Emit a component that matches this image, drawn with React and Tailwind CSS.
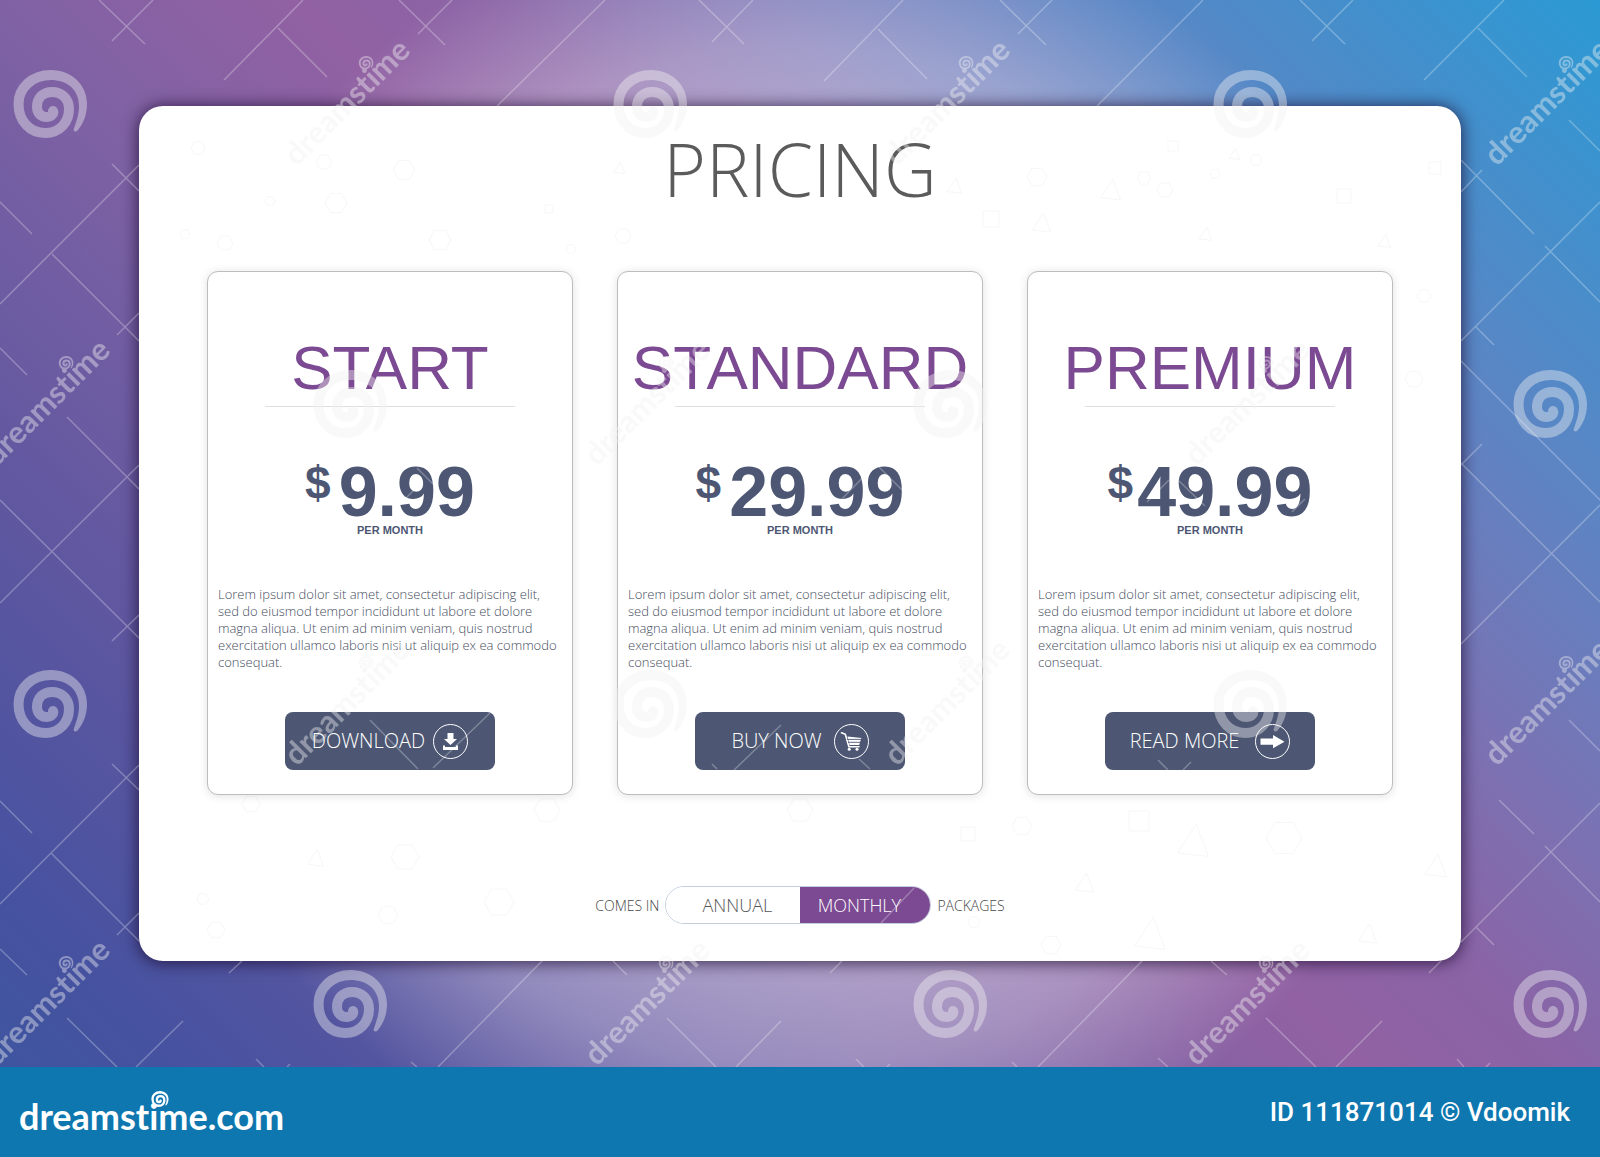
import { useState } from 'react';

const LOREM =
  'Lorem ipsum dolor sit amet, consectetur adipiscing elit, sed do eiusmod tempor incididunt ut labore et dolore magna aliqua. Ut enim ad minim veniam, quis nostrud exercitation ullamco laboris nisi ut aliquip ex ea commodo consequat.';

const DownloadGlyph = () => (
  <>
    <path d="M14.5 9h6v6h3.5L17.5 21 11 15h3.5z" fill="currentColor" />
    <path d="M10 21.5h2V23h11v-1.5h2V26H10z" fill="currentColor" />
  </>
);

const CartGlyph = () => (
  <>
    <path d="M7.5 8.8l3.8 1.4 3.6 12.6H25" fill="none" stroke="currentColor" strokeWidth="1.6" strokeLinecap="round" strokeLinejoin="round" />
    <path d="M13.4 12.6l14 1.4-2.2 7H15.6z" fill="currentColor" />
    <path d="M13 15.4h15M14 18.3h13" stroke="#4d5773" strokeWidth="0.9" />
    <circle cx="15.2" cy="25.2" r="1.5" fill="currentColor" />
    <circle cx="23" cy="25.2" r="1.5" fill="currentColor" />
  </>
);

const ArrowGlyph = () => (
  <path d="M5.5 14.5H18V11l11.5 6.7L18 24.3v-3.600H5.5z" fill="currentColor" />
);

const plans = [
  { name: 'START', price: '9.99', action: 'DOWNLOAD', glyph: DownloadGlyph, gap: 'gap-2', priceGap: 'gap-2' },
  { name: 'STANDARD', price: '29.99', action: 'BUY NOW', glyph: CartGlyph, gap: 'gap-3', priceGap: 'gap-2' },
  { name: 'PREMIUM', price: '49.99', action: 'READ MORE', glyph: ArrowGlyph, gap: 'gap-4', priceGap: 'gap-1' },
];

// Faint outlines scattered over the panel: [type, x, y, radius]
const confetti = [
  ['hex', 59, 42, 7], ['hex', 185, 56, 8], ['hex', 265, 64, 11], ['hex', 197, 97, 11], ['hex', 301, 134, 11],
  ['hex', 86, 137, 8], ['hex', 131, 95, 5], ['hex', 46, 128, 5], ['sq', 410, 103, 4], ['hex', 432, 143, 5],
  ['hex', 484, 130, 8], ['tri', 480, 62, 6], ['sq', 852, 113, 8], ['tri', 815, 80, 8], ['tri', 902, 117, 10],
  ['hex', 898, 71, 10], ['tri', 971, 84, 11], ['hex', 1005, 72, 7], ['hex', 1026, 84, 8], ['sq', 1034, 40, 5],
  ['tri', 1095, 48, 6], ['hex', 1117, 54, 6], ['hex', 1076, 68, 5], ['sq', 1205, 90, 7], ['sq', 1296, 62, 6],
  ['tri', 1066, 128, 7], ['tri', 1245, 135, 7], ['hex', 1285, 190, 7], ['hex', 1275, 273, 9],
  ['hex', 112, 698, 9], ['tri', 176, 752, 9], ['hex', 266, 751, 14], ['hex', 249, 809, 10], ['hex', 360, 796, 15],
  ['hex', 64, 793, 6], ['hex', 77, 824, 9], ['hex', 661, 704, 13], ['hex', 408, 704, 13], ['sq', 829, 728, 7],
  ['hex', 883, 720, 10], ['sq', 1000, 715, 10], ['tri', 1053, 735, 17], ['hex', 1145, 732, 18], ['tri', 1296, 760, 12],
  ['tri', 945, 777, 10], ['tri', 1010, 828, 17], ['tri', 1228, 828, 10], ['hex', 912, 839, 10], ['hex', 835, 816, 6],
];

const hex = (x, y, r) =>
  [0, 60, 120, 180, 240, 300]
    .map((a) => `${x + r * Math.cos((a * Math.PI) / 180)},${y + r * Math.sin((a * Math.PI) / 180)}`)
    .join(' ');

const Confetti = () => (
  <svg className="absolute inset-0 w-full h-full" aria-hidden="true" fill="none" stroke="#f7f7f8">
    {confetti.map(([type, x, y, r]) => {
      const key = `${x}-${y}`;
      if (type === 'sq') return <rect key={key} x={x - r} y={y - r} width={r * 2} height={r * 2} />;
      if (type === 'tri') return <path key={key} d={`M${x + r / 4} ${y - r}l${r * 0.7} ${r * 1.9}l${-r * 1.8} ${-r * 0.2}z`} />;
      return <polygon key={key} points={hex(x, y, r)} />;
    })}
  </svg>
);

const Swirl = () => (
  <g>
    <path
      d="M51 75C32 75 18.500 88 18.500 104C18.500 121 30 133 45 133C60 133 69 122 69 109C69 98 61 92 52 92C43 92 37 98 37 107C37 114 42 117 47 117C52 117 54 113 53 111"
      fill="none"
      stroke="currentColor"
      strokeWidth="10"
      strokeLinecap="round"
    />
    <path
      d="M50 70C73 70 87 86 87 104C87 115 83 124 78 130Q75 133 73.500 130C76 122 79 115 79 106C79 90 68 80 50 80z"
      fill="currentColor"
    />
  </g>
);

// Thin diagonal strokes of the overlay
const strokes =
  'M99 0L145 44M153 0L112 41M303 0L224 80M278 28L327 77M399 0L445 45M452 0L418 34M605 0L497 106' +
  'M699 0L744 44M753 0L712 42M903 0L824 81M878 29L927 79M1000 0L1046 45M1052 0L1018 34M1203 0L1097 106' +
  'M1300 0L1345 44M1353 0L1312 41M1504 0L1424 80M1478 28L1527 77' +
  'M112 164L139 191M139 165L0 304M0 202L32 234M52 254L139 341M117 335L139 313M0 348L27 375' +
  'M67 417L139 489M139 465L0 603M0 500L139 638M112 641L139 615M112 764L139 790M139 765L0 904M0 801L32 833' +
  'M51 853L139 941M117 935L139 913M0 949L27 975M67 1018L117 1067M183 1021L136 1067M256 1059L264 1067M290 1064L287 1067' +
  'M229 973L242 961M542 961L438 1067M411 1062L417 1067M613 961L627 975M667 1018L716 1067M781 1021L736 1067' +
  'M830 973L842 961M856 1059L864 1067M890 1064L887 1067M1142 961L1038 1067M1012 1062L1017 1067M1158 1058L1168 1067' +
  'M1211 961L1227 975M1266 1018L1316 1067M1382 1021L1336 1067M1429 973L1441 961M1457 1059L1464 1067M1490 1063L1486 1067' +
  'M1461 160L1534 234M1461 192L1482 170M1569 120L1600 151M1545 246L1600 302M1600 202L1461 341M1476 327L1494 345' +
  'M1600 500L1461 361M1461 465L1482 444M1461 463L1600 602M1600 505L1461 644M1569 720L1600 751' +
  'M1499 800L1534 834M1545 846L1600 902M1600 803L1461 942M1476 927L1494 945' +
  'M370 720L418 769M433 768L490 713M781 725L734 770M859 759L870 769M712 764L717 769M1158 760L1168 770M1191 762L1183 770' +
  'M417 468L435 486M423 481L405 499M875 465L838 503M878 466L903 491M1169 480L1147 502M1179 481L1205 506M1305 499L1292 512' +
  'M914 888L881 923';

const offsets = [[0, 0], [600, 0], [300, 300], [-300, 300], [-300, -300], [0, 600]];

const MarkPattern = ({ id, color }) => (
  <pattern id={id} width="600" height="600" patternUnits="userSpaceOnUse" color={color}>
    {offsets.map(([x, y]) => (
      <g key={`${x},${y}`} transform={`translate(${x} ${y})`}>
        <Swirl />
        <text
          transform="translate(297 167) rotate(-45)"
          fill="currentColor"
          className="font-['Lato',sans-serif] text-[31px] font-bold [font-variant-ligatures:none]"
        >
          dreamstime
        </text>
        <g transform="translate(356 42) scale(0.2)">
          <Swirl />
        </g>
      </g>
    ))}
  </pattern>
);

const Watermark = () => (
  <svg className="pointer-events-none absolute inset-0 w-full h-full" aria-hidden="true">
    <defs>
      <MarkPattern id="marks-shade" color="#555" />
      <MarkPattern id="marks-light" color="#fff" />
    </defs>
    <rect width="100%" height="100%" fill="url(#marks-shade)" opacity="0.05" />
    <rect width="100%" height="100%" fill="url(#marks-light)" opacity="0.38" />
    <path d={strokes} stroke="#fff" strokeOpacity="0.28" strokeWidth="1.5" />
  </svg>
);

const PlanCard = ({ plan }) => {
  const Glyph = plan.glyph;
  return (
    <article className="relative flex w-[366px] flex-col items-center rounded-[11px] border border-[#bdbdbf] bg-white px-[10px] pt-[65px] pb-[24px] shadow-[0_1px_10px_rgba(0,0,0,0.12)]">
      <h2 className="font-['Liberation_Sans',Arial,sans-serif] text-[62px] leading-none text-[#7c4a93]">{plan.name}</h2>
      <hr className="mt-[7px] w-[250px] border-t border-[#dedede]" />
      <p className={`mt-[53px] flex items-start font-['Liberation_Sans',Arial,sans-serif] font-bold text-[#4d5773] ${plan.priceGap}`}>
        <span className="text-[46px] leading-none">$</span>
        <span className="text-[70px] leading-[65px]">{plan.price}</span>
      </p>
      <p className="font-['Liberation_Sans',Arial,sans-serif] text-[11px] leading-none font-bold text-[#4d5773]">PER MONTH</p>
      <p className="mt-[50px] w-full text-[13px] leading-[17px] font-light text-[#454d5e]">{LOREM}</p>
      <button
        type="button"
        className={`mt-[41px] flex h-[58px] w-[210px] cursor-pointer items-center justify-center rounded-lg bg-[#4d5773] text-[20px] font-light text-white ${plan.gap}`}
      >
        {plan.action}
        <svg width="35" height="35" viewBox="0 0 35 35" aria-hidden="true">
          <circle cx="17.5" cy="17.5" r="17" fill="none" stroke="currentColor" strokeWidth="1" />
          <Glyph />
        </svg>
      </button>
    </article>
  );
};

const BillingToggle = () => {
  const [billing, setBilling] = useState('monthly');
  const active = 'bg-[#7c4a93] text-white';
  const idle = 'bg-white text-[#555]';

  return (
    <div className="relative mt-[91px] flex items-center justify-center gap-[6px] text-[14px] font-light text-[#444]">
      <span>COMES IN</span>
      <div role="group" aria-label="Billing period" className="flex h-[38px] w-[266px] overflow-hidden rounded-full border border-[#c3cfdf] text-[18px]">
        <button
          type="button"
          aria-pressed={billing === 'annual'}
          onClick={() => setBilling('annual')}
          className={`w-[134px] cursor-pointer pl-2 ${billing === 'annual' ? active : idle}`}
        >
          ANNUAL
        </button>
        <button
          type="button"
          aria-pressed={billing === 'monthly'}
          onClick={() => setBilling('monthly')}
          className={`flex-1 cursor-pointer pr-3 ${billing === 'monthly' ? active : idle}`}
        >
          MONTHLY
        </button>
      </div>
      <span>PACKAGES</span>
    </div>
  );
};

export default function App() {
  return (
    <div className="font-['Open_Sans','Noto_Sans',sans-serif]">
      <main className="relative overflow-hidden bg-[radial-gradient(circle_at_50%_52%,rgba(255,255,255,0.38)_430px,rgba(255,255,255,0.3)_510px,rgba(255,255,255,0)_660px),linear-gradient(45deg,#3f559f_0%,#4552a0_6%,#5b56a0_19%,#8062a4_40%,#9161a3_51%,#8a64a6_59%,#7b72b3_68%,#5c85c4_81%,#2b9ad4_100%)] px-[139px] py-[106px]">
        <section className="relative rounded-3xl bg-white px-[68px] pt-[25px] pb-[37px] shadow-[0_1px_16px_1px_rgba(25,10,45,0.75)]">
          <Confetti />
          <h1 className="relative text-center text-[73px] leading-[75px] font-light text-[#5b5b5b]">PRICING</h1>
          <div className="mt-[65px] flex flex-wrap justify-between gap-y-10">
            {plans.map((plan) => (
              <PlanCard key={plan.name} plan={plan} />
            ))}
          </div>
          <BillingToggle />
        </section>
        <Watermark />
      </main>
      <footer className="flex h-[90px] items-center justify-between bg-[#0f77af] pr-[30px] pl-[19px] text-white">
        <a href="#home" className="relative pt-2 font-['Lato',sans-serif] text-[36px] leading-none font-bold [font-variant-ligatures:none]">
          dreamstime.com
          <svg className="absolute top-0 left-[132px] h-[18px] w-[18px]" viewBox="12 68 77 72" aria-hidden="true">
            <Swirl />
          </svg>
        </a>
        <p className="font-['Roboto',sans-serif] text-[26px] font-medium">ID 111871014 © Vdoomik</p>
      </footer>
    </div>
  );
}
